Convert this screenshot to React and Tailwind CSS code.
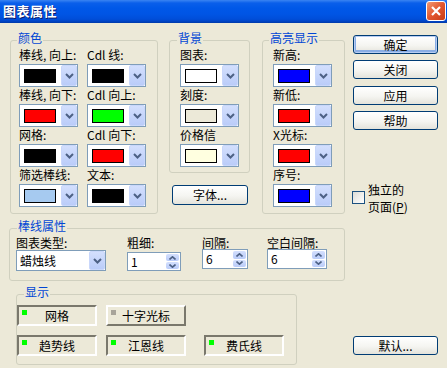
import React from "react";

const Chevron = ({ up = false }) => (
  <svg width="9" height="6" viewBox="0 0 9 6">
    <path
      d={up ? "M1 5 L4.5 1.5 L8 5" : "M1 1 L4.5 4.5 L8 1"}
      stroke="#4D6185"
      strokeWidth="2"
      fill="none"
    />
  </svg>
);

const DropBtn = ({ className = "" }) => (
  <div
    className={`w-[16px] rounded-[2px] border border-[#C9D7FB] bg-[linear-gradient(to_bottom,#D3DFFD,#BACCF9)] flex items-center justify-center ${className}`}
  >
    <Chevron />
  </div>
);

const ColorCombo = ({ color }) => (
  <div className="w-[59px] h-[23px] border border-[#7F9DB9] bg-white flex items-center pl-[4px]">
    <div className={`w-[32px] h-[14px] border border-black ${color}`} />
    <DropBtn className="ml-auto h-[21px]" />
  </div>
);

const Field = ({ label, color }) => (
  <div className="flex flex-col">
    <div className="h-[17px] pt-[1px] leading-[14px] whitespace-nowrap">{label}</div>
    <ColorCombo color={color} />
  </div>
);

const Legend = ({ children, className = "" }) => (
  <span
    className={`absolute -top-[10px] px-[1px] bg-[#ECE9D8] text-[#0046D5] leading-[14px] whitespace-nowrap ${className}`}
  >
    {children}
  </span>
);

const XPButton = ({ children, className = "" }) => (
  <div
    className={`h-[19px] border border-[#003C74] rounded-[3px] bg-[linear-gradient(to_bottom,#FFFFFF_0%,#F5F5F1_55%,#E4E3DB_100%)] flex items-center justify-center leading-[14px] ${className}`}
  >
    {children}
  </div>
);

const Spin = ({ value, className = "" }) => (
  <div
    className={`border border-[#7F9DB9] bg-white flex items-stretch ${className}`}
  >
    <span className="flex-1 pl-[3px] flex items-center leading-[14px]">
      {value}
    </span>
    <div className="w-[15px] flex flex-col gap-[1px] p-[1px]">
      <div className="flex-1 rounded-[2px] bg-[linear-gradient(to_bottom,#D3DFFD,#BACCF9)] flex items-center justify-center">
        <svg width="7" height="4" viewBox="0 0 7 4">
          <path d="M0.5 3.5 L3.5 0.8 L6.5 3.5" stroke="#4D6185" strokeWidth="1.6" fill="none" />
        </svg>
      </div>
      <div className="flex-1 rounded-[2px] bg-[linear-gradient(to_bottom,#D3DFFD,#BACCF9)] flex items-center justify-center">
        <svg width="7" height="4" viewBox="0 0 7 4">
          <path d="M0.5 0.5 L3.5 3.2 L6.5 0.5" stroke="#4D6185" strokeWidth="1.6" fill="none" />
        </svg>
      </div>
    </div>
  </div>
);

const Toggle = ({ children, on = true, className = "" }) => (
  <div
    className={`relative w-[80px] h-[21px] border-2 flex items-center justify-center leading-[14px] ${
      on
        ? "border-t-[#7A786C] border-l-[#7A786C] border-b-white border-r-white"
        : "border-t-white border-l-white border-b-[#7A786C] border-r-[#7A786C]"
    } ${className}`}
  >
    <span
      className={`absolute left-[3px] top-[3px] w-[5px] h-[5px] ${
        on ? "bg-[#00FF00]" : "bg-[#A8A49A]"
      }`}
    />
    {children}
  </div>
);

export default function App() {
  return (
    <div className="w-[447px] h-[368px] bg-[#ECE9D8] overflow-hidden [font-family:'Noto_Sans_CJK_SC','Noto_Sans',sans-serif] text-[12px] leading-[14px] text-black">
      {/* Title bar */}
      <div className="h-[23px] flex items-start justify-between pr-[1px] bg-[linear-gradient(to_bottom,#3A84F2_0px,#0A5FEA_3px,#0058E8_8px,#0055E5_14px,#004ED9_19px,#0045C8_21px,#003AA8_23px)]">
        <div className="pl-[3px] pt-[3px] text-white font-bold text-[13px] leading-[15px] tracking-[0.5px] [text-shadow:1px_1px_0_#0A1A6A]">
          图表属性
        </div>
        <div className="mt-[1px] w-[20px] h-[20px] rounded-[3px] border border-white bg-[linear-gradient(135deg,#F29A74,#E2562F_50%,#C83C17)] flex items-center justify-center">
          <svg width="10" height="10" viewBox="0 0 10 10">
            <path d="M1 1 L9 9 M9 1 L1 9" stroke="white" strokeWidth="2.2" />
          </svg>
        </div>
      </div>

      {/* Top row */}
      <div className="flex items-start pt-[12px]">
        {/* 颜色 */}
        <div className="relative ml-[10px] mt-[5px] w-[148px] h-[174px] border border-[#D0D0BF] rounded-[3px] pl-[8px] pt-[6px] grid grid-cols-[59px_59px] gap-x-[9px] content-start">
          <Legend className="left-[6px]">颜色</Legend>
          <Field label="棒线, 向上:" color="bg-black" />
          <Field label="Cdl  线:" color="bg-black" />
          <Field label="棒线, 向下:" color="bg-[#FF0000]" />
          <Field label="Cdl  向上:" color="bg-[#00FF00]" />
          <Field label="网格:" color="bg-black" />
          <Field label="Cdl  向下:" color="bg-[#FF0000]" />
          <Field label="筛选棒线:" color="bg-[#A6CAF0]" />
          <Field label="文本:" color="bg-black" />
        </div>

        {/* 背景 */}
        <div className="ml-[11px] flex flex-col">
          <div className="relative mt-[5px] w-[81px] h-[133px] border border-[#D0D0BF] rounded-[3px] pl-[10px] pt-[6px] flex flex-col">
            <Legend className="left-[7px]">背景</Legend>
            <Field label="图表:" color="bg-white" />
            <Field label="刻度:" color="bg-[#ECE9D8]" />
            <Field label="价格信" color="bg-[#FFFFE0]" />
          </div>
          <XPButton className="mt-[12px] ml-[3px] w-[76px] h-[20px]">
            字体...
          </XPButton>
        </div>

        {/* 高亮显示 */}
        <div className="relative ml-[12px] mt-[5px] w-[83px] h-[174px] border border-[#D0D0BF] rounded-[3px] pl-[10px] pt-[6px] flex flex-col">
          <Legend className="left-[6px]">高亮显示</Legend>
          <Field label="新高:" color="bg-[#0000FF]" />
          <Field label="新低:" color="bg-[#FF0000]" />
          <Field label="X光标:" color="bg-[#FF0000]" />
          <Field label="序号:" color="bg-[#0000FF]" />
        </div>

        {/* Buttons */}
        <div className="ml-[8px] w-[85px] flex flex-col">
          <XPButton className="shadow-[inset_0_0_0_1px_#B7CDF3,inset_0_-1px_0_2px_#89ADE4]">
            确定
          </XPButton>
          <XPButton className="mt-[6px]">关闭</XPButton>
          <XPButton className="mt-[7px]">应用</XPButton>
          <XPButton className="mt-[6px]">帮助</XPButton>
          <div className="mt-[51px] -ml-[1px] flex items-start">
            <div className="mt-[10px] w-[13px] h-[13px] border border-[#1C5180] bg-[linear-gradient(135deg,#DCDCD7,#FFFFFF)]" />
            <div className="ml-[3px] leading-[17px]">
              <div>独立的</div>
              <div>
                页面(<u>P</u>)
              </div>
            </div>
          </div>
        </div>
      </div>

      {/* Bottom section */}
      <div className="flex items-start">
        <div className="w-[345px] flex flex-col">
          {/* 棒线属性 */}
          <div className="relative mt-[13px] ml-[9px] w-[336px] h-[53px] border border-[#D0D0BF] rounded-[3px] pl-[6px] pt-[7px] flex items-start">
            <Legend className="left-[7px]">棒线属性</Legend>
            <div className="w-[90px] flex flex-col">
              <div className="h-[14px] leading-[14px] whitespace-nowrap">图表类型:</div>
              <div className="w-[90px] h-[21px] border border-[#7F9DB9] bg-white flex items-center pl-[3px]">
                <span>蜡烛线</span>
                <DropBtn className="ml-auto h-[19px]" />
              </div>
            </div>
            <div className="ml-[21px] flex flex-col">
              <div className="h-[14px] leading-[14px]">粗细:</div>
              <Spin value="1" className="mt-[2px] w-[54px] h-[19px]" />
            </div>
            <div className="ml-[21px] flex flex-col">
              <div className="h-[13px] leading-[13px]">间隔:</div>
              <Spin value="6" className="w-[46px] h-[20px]" />
            </div>
            <div className="ml-[19px] flex flex-col">
              <div className="h-[13px] leading-[13px] whitespace-nowrap">空白间隔:</div>
              <Spin value="6" className="w-[60px] h-[20px]" />
            </div>
          </div>

          {/* 显示 */}
          <div className="relative mt-[13px] ml-[16px] w-[281px] h-[71px] border border-[#D0D0BF] rounded-[3px] pt-[10px] flex flex-col gap-[9px]">
            <Legend className="left-[7px]">显示</Legend>
            <div className="flex">
              <Toggle>网格</Toggle>
              <Toggle on={false} className="ml-[9px]">
                十字光标
              </Toggle>
            </div>
            <div className="flex">
              <Toggle>趋势线</Toggle>
              <Toggle className="ml-[9px]">江恩线</Toggle>
              <Toggle className="ml-[18px]">费氏线</Toggle>
            </div>
          </div>
        </div>
        <XPButton className="mt-[121px] ml-[8px] w-[85px]">默认...</XPButton>
      </div>
    </div>
  );
}
